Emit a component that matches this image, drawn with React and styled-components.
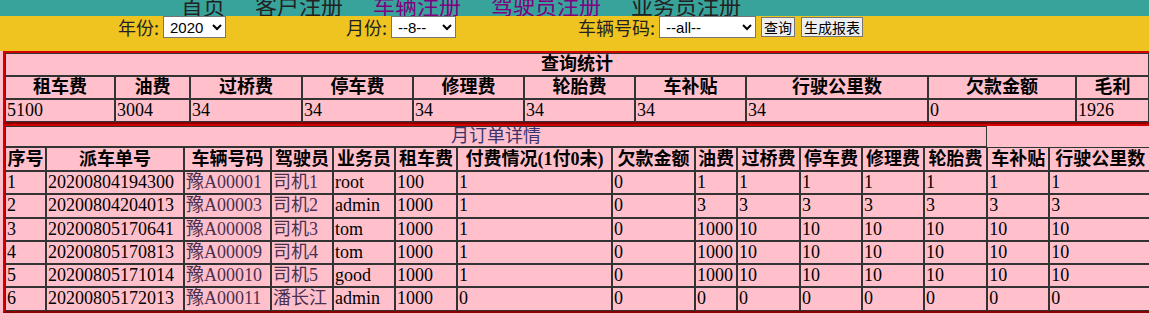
import React from "react";
import styled, { createGlobalStyle } from "styled-components";

const GlobalStyle = createGlobalStyle`
  html, body {
    margin: 0;
    padding: 0;
    background: #ffc0cb;
    overflow: hidden;
  }
  body {
    font-family: "Liberation Serif", "Noto Sans CJK SC", serif;
    font-size: 18px;
    color: #000;
  }
`;

const NavBar = styled.div`
  height: 16px;
  background: #38a39a;
  overflow: hidden;
`;

const NavList = styled.div`
  display: flex;
  gap: 30px;
  padding-left: 181px;
  margin-top: -9px;
  font-family: "Noto Sans CJK SC", sans-serif;
  font-size: 22px;
  line-height: 26px;
`;

const NavLink = styled.a`
  color: ${(p) => (p.$visited ? "#800080" : "#222")};
  text-decoration: none;
  white-space: nowrap;
`;

const FilterBand = styled.div`
  height: 35px;
  background: #f0c420;
`;

const FilterRow = styled.div`
  display: flex;
  align-items: center;
  height: 22px;
  padding-left: 118px;
`;

const Field = styled.div`
  display: flex;
  align-items: center;
  margin-right: ${(p) => p.$gap || 0}px;
`;

const Label = styled.span`
  font-family: "Noto Sans CJK SC", sans-serif;
  font-size: 18px;
  line-height: 22px;
  color: #222;
  margin-right: 4px;
  white-space: nowrap;
`;

const Select = styled.select`
  width: ${(p) => p.$w}px;
  height: 22px;
  font-family: "Liberation Sans", sans-serif;
  font-size: 15px;
  border: 1px solid #767676;
  border-radius: 0;
  background: #fff;
  padding: 0 2px;
  color: #000;
`;

const Button = styled.button`
  margin-left: ${(p) => p.$ml || 0}px;
  height: 20px;
  padding: 0 2px;
  font-family: "Noto Sans CJK SC", sans-serif;
  font-size: 14px;
  line-height: 16px;
  color: #000;
  background: #efefef;
  border: 1px solid #767676;
  border-radius: 0;
`;

const Content = styled.div`
  padding-left: 3px;
`;

const Table = styled.table`
  table-layout: fixed;
  width: ${(p) => p.$w}px;
  border-collapse: separate;
  border-spacing: 0;
  border: 2px solid;
  border-color: #d40000 #8a0000 #8a0000 #d40000;
  background: #ffc0cb;
`;

const Head = styled.th`
  border: 1px solid #333;
  padding: 0 1px;
  font-weight: bold;
  text-align: center;
  line-height: ${(p) => p.$lh || 21}px;
  white-space: nowrap;
  overflow: hidden;
`;

const Caption = styled.td`
  border: ${(p) => (p.$plain ? "none" : "1px solid #333")};
  padding: 0;
  text-align: center;
  line-height: ${(p) => p.$lh || 21}px;
  font-weight: ${(p) => (p.$bold ? "bold" : "normal")};
  color: ${(p) => p.$color || "#000"};
`;

const Cell = styled.td`
  border: 1px solid #333;
  padding: 0 1px;
  line-height: ${(p) => p.$lh || 21}px;
  text-align: left;
  white-space: nowrap;
  overflow: hidden;
  color: ${(p) => (p.$link ? "#4a3050" : "#000")};
`;

const statCols = [110, 75, 112, 111, 111, 111, 111, 182, 148, 73];
const statHeads = ["租车费", "油费", "过桥费", "停车费", "修理费", "轮胎费", "车补贴", "行驶公里数", "欠款金额", "毛利"];
const statVals = ["5100", "3004", "34", "34", "34", "34", "34", "34", "0", "1926"];

const detailCols = [41, 138, 87, 62, 62, 62, 155, 83, 42, 63, 62, 62, 63, 62, 102];
const detailHeads = ["序号", "派车单号", "车辆号码", "驾驶员", "业务员", "租车费", "付费情况(1付0未)", "欠款金额", "油费", "过桥费", "停车费", "修理费", "轮胎费", "车补贴", "行驶公里数"];

const orders = [
  ["1", "20200804194300", "豫A00001", "司机1", "root", "100", "1", "0", "1", "1", "1", "1", "1", "1", "1"],
  ["2", "20200804204013", "豫A00003", "司机2", "admin", "1000", "1", "0", "3", "3", "3", "3", "3", "3", "3"],
  ["3", "20200805170641", "豫A00008", "司机3", "tom", "1000", "1", "0", "1000", "10", "10", "10", "10", "10", "10"],
  ["4", "20200805170813", "豫A00009", "司机4", "tom", "1000", "1", "0", "1000", "10", "10", "10", "10", "10", "10"],
  ["5", "20200805171014", "豫A00010", "司机5", "good", "1000", "1", "0", "1000", "10", "10", "10", "10", "10", "10"],
  ["6", "20200805172013", "豫A00011", "潘长江", "admin", "1000", "0", "0", "0", "0", "0", "0", "0", "0", "0"],
];

const navItems = [
  { text: "首页" },
  { text: "客户注册" },
  { text: "车辆注册", visited: true },
  { text: "驾驶员注册", visited: true },
  { text: "业务员注册" },
];

const App = () => {
  return (
    <>
      <GlobalStyle />
      <NavBar>
        <NavList>
          {navItems.map((n) => (
            <NavLink key={n.text} href="#" $visited={n.visited}>{n.text}</NavLink>
          ))}
        </NavList>
      </NavBar>

      <FilterBand>
        <FilterRow>
          <Field $gap={120}>
            <Label>年份:</Label>
            <Select $w={63} defaultValue="2020">
              <option>2020</option>
            </Select>
          </Field>
          <Field $gap={122}>
            <Label>月份:</Label>
            <Select $w={65} defaultValue="--8--">
              <option>--8--</option>
            </Select>
          </Field>
          <Field>
            <Label>车辆号码:</Label>
            <Select $w={97} defaultValue="--all--">
              <option>--all--</option>
            </Select>
            <Button type="button" $ml={5}>查询</Button>
            <Button type="button" $ml={6}>生成报表</Button>
          </Field>
        </FilterRow>
      </FilterBand>

      <Content>
        <Table $w={1148}>
          <colgroup>
            {statCols.map((w, i) => <col key={i} width={w} />)}
          </colgroup>
          <tbody>
            <tr>
              <Caption colSpan={10} $bold>查询统计</Caption>
            </tr>
            <tr>
              {statHeads.map((h) => <Head key={h}>{h}</Head>)}
            </tr>
            <tr>
              {statVals.map((v, i) => <Cell key={i}>{v}</Cell>)}
            </tr>
          </tbody>
        </Table>

        <Table $w={1150}>
          <colgroup>
            {detailCols.map((w, i) => <col key={i} width={w} />)}
          </colgroup>
          <tbody>
            <tr>
              <Caption colSpan={13} $lh={19} $color="#3a3470">月订单详情</Caption>
              <Caption colSpan={2} $plain $lh={19}></Caption>
            </tr>
            <tr>
              {detailHeads.map((h) => <Head key={h} $lh={22}>{h}</Head>)}
            </tr>
            {orders.map((row) => (
              <tr key={row[0]}>
                {row.map((v, i) => (
                  <Cell key={i} $lh={21.3} $link={i === 2 || i === 3}>{v}</Cell>
                ))}
              </tr>
            ))}
          </tbody>
        </Table>
      </Content>
    </>
  );
};

export default App;
